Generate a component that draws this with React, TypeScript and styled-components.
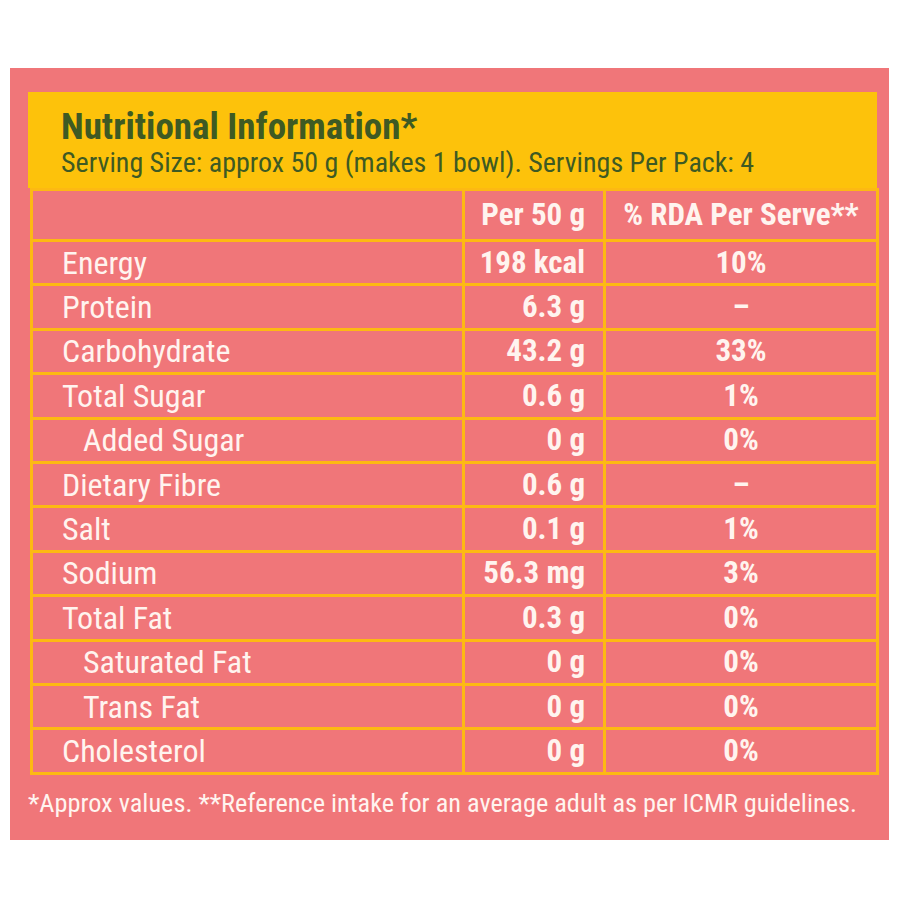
import styled, { createGlobalStyle } from "styled-components";

const GlobalStyle = createGlobalStyle`
    body {
        margin: 0;
        background: #ffffff;
        font-family: "Roboto Condensed", Roboto, "Liberation Sans", sans-serif;
    }
`;

const Page = styled.div`
    width: 900px;
    height: 900px;
    padding: 68px 11px 0 10px;
    box-sizing: border-box;
`;

const Panel = styled.div`
    background-color: #f07679;
    padding: 24px 12px 0 18px;
    height: 772px;
    box-sizing: border-box;
`;

const Header = styled.div`
    background-color: #fdc20b;
    padding: 16px 0 8px 33px;
    color: #3e5a23;
`;

const Title = styled.h1`
    margin: 0;
    font-size: 37px;
    line-height: 38px;
    font-weight: 700;
`;

const Subtitle = styled.p`
    margin: 0;
    font-size: 28px;
    line-height: 34px;
`;

const Table = styled.table`
    border-collapse: collapse;
    margin-left: 2px;
    width: 846px;
    table-layout: fixed;
    color: #fff4ef;
`;

const Cell = styled.td`
    border: 3px solid #fdb913;
    padding: 0;
    line-height: 40px;
    white-space: nowrap;
`;

const NameCell = styled(Cell)<{ $indent?: boolean }>`
    padding-left: ${(p) => (p.$indent ? "50px" : "29px")};
    font-size: 32px;
    font-weight: 400;
`;

const ValueCell = styled(Cell)`
    padding-right: 18px;
    text-align: right;
    font-size: 31px;
    font-weight: 700;
`;

const RdaCell = styled(Cell)`
    text-align: center;
    font-size: 31px;
    font-weight: 700;
`;

const BodyRow = styled.tr`
    height: 44.4px;
`;

const HeadRow = styled.tr`
    height: 51px;
`;

const Footnote = styled.p`
    margin: 0;
    padding: 10px 0 0 0;
    color: #fff4ef;
    font-size: 26.3px;
    line-height: 36px;
    white-space: nowrap;
`;

type Row = { name: string; value: string; rda: string; indent?: boolean };

const rows: Row[] = [
    { name: "Energy", value: "198 kcal", rda: "10%" },
    { name: "Protein", value: "6.3 g", rda: "–" },
    { name: "Carbohydrate", value: "43.2 g", rda: "33%" },
    { name: "Total Sugar", value: "0.6 g", rda: "1%" },
    { name: "Added Sugar", value: "0 g", rda: "0%", indent: true },
    { name: "Dietary Fibre", value: "0.6 g", rda: "–" },
    { name: "Salt", value: "0.1 g", rda: "1%" },
    { name: "Sodium", value: "56.3 mg", rda: "3%" },
    { name: "Total Fat", value: "0.3 g", rda: "0%" },
    { name: "Saturated Fat", value: "0 g", rda: "0%", indent: true },
    { name: "Trans Fat", value: "0 g", rda: "0%", indent: true },
    { name: "Cholesterol", value: "0 g", rda: "0%" },
];

export default function App() {
    return (
        <Page>
            <GlobalStyle />
            <Panel>
                <Header>
                    <Title>Nutritional Information*</Title>
                    <Subtitle>Serving Size: approx 50 g (makes 1 bowl). Servings Per Pack: 4</Subtitle>
                </Header>
                <Table>
                    <colgroup>
                        <col style={{ width: 432 }} />
                        <col style={{ width: 141 }} />
                        <col style={{ width: 273 }} />
                    </colgroup>
                    <tbody>
                        <HeadRow>
                            <NameCell />
                            <ValueCell>Per 50 g</ValueCell>
                            <RdaCell>% RDA Per Serve**</RdaCell>
                        </HeadRow>
                        {rows.map((r) => (
                            <BodyRow key={r.name}>
                                <NameCell $indent={r.indent}>{r.name}</NameCell>
                                <ValueCell>{r.value}</ValueCell>
                                <RdaCell>{r.rda}</RdaCell>
                            </BodyRow>
                        ))}
                    </tbody>
                </Table>
                <Footnote>*Approx values. **Reference intake for an average adult as per ICMR guidelines.</Footnote>
            </Panel>
        </Page>
    );
}
